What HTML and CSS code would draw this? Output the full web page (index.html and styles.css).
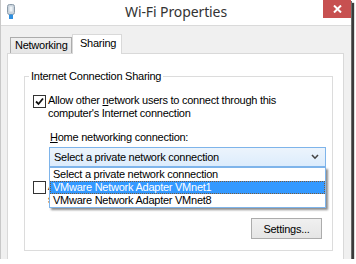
FILE: index.html
```html
<!DOCTYPE html>
<html>
<head>
<meta charset="utf-8">
<link rel="stylesheet" href="styles.css">
</head>
<body>
<div class="window">
  <div class="titlebar">
    <div class="tb-left">
      <svg class="app-icon" width="8" height="15" viewBox="0 0 8 15">
        <rect x="0.5" y="0.5" width="7" height="10" rx="2" fill="#c9d3dc" stroke="#8a9aa8"/>
        <rect x="2.5" y="2.5" width="3" height="5" fill="#eef3f7"/>
        <rect x="2" y="10.5" width="4" height="4.5" fill="#2e8fe0"/>
      </svg>
    </div>
    <div class="title">Wi-Fi Properties</div>
    <div class="tb-right">
      <div class="close">
        <svg width="9" height="8" viewBox="0 0 9 8"><path d="M1 0.5 L8 7.5 M8 0.5 L1 7.5" stroke="#fff" stroke-width="2"/></svg>
      </div>
    </div>
  </div>
  <div class="body">
    <div class="tabs">
      <div class="tab">Networking</div>
      <div class="tab active">Sharing</div>
    </div>
    <div class="pane">
      <div class="group">
        <div class="group-label">Internet Connection Sharing</div>
        <div class="check-row first">
          <span class="checkbox checked">
            <svg width="11" height="11" viewBox="0 0 11 11"><path d="M2 5.5 L4.5 8 L9 2.5" fill="none" stroke="#111" stroke-width="1.8"/></svg>
          </span>
          <span class="check-text">Allow other <u>n</u>etwork users to connect through this<br>computer's Internet connection</span>
        </div>
        <div class="field-label"><u>H</u>ome networking connection:</div>
        <div class="combo-wrap">
          <div class="combo">
            <span>Select a private network connection</span>
            <svg class="arrow" width="8" height="6" viewBox="0 0 8 6"><path d="M1 1 L4 4.2 L7 1" fill="none" stroke="#444" stroke-width="1.6"/></svg>
          </div>
          <ul class="dropdown">
            <li>Select a private network connection</li>
            <li class="selected">VMware Network Adapter VMnet1</li>
            <li>VMware Network Adapter VMnet8</li>
          </ul>
        </div>
        <div class="check-row second">
          <span class="checkbox"></span>
          <span class="check-text">Allow other network users to control or disable the<br>shared Internet connection</span>
        </div>
        <div class="actions">
          <div class="button">Settings...</div>
        </div>
      </div>
    </div>
  </div>
</div>
</body>
</html>
```
FILE: styles.css
```css
* { box-sizing: border-box; }
html, body { margin: 0; padding: 0; background: #fff; }
body {
  font-family: "Liberation Sans", Arial, sans-serif;
  font-size: 11px;
  letter-spacing: -0.25px;
  color: #000;
}
.window {
  width: 351px;
  height: 259px;
  border-left: 1px solid #c8c8c8;
  background: #f0f0f0;
  overflow: hidden;
  box-shadow: 1px 1px 0 #6a6a6a, 3px 3px 1px #3a3a3a;
}
.titlebar {
  height: 26px;
  background: #fff;
  border-bottom: 1px solid #dadada;
  display: grid;
  grid-template-columns: 1fr auto 1fr;
  align-items: start;
}
.tb-left { padding: 4px 0 0 6px; }
.app-icon { display: block; }
.title {
  font-family: "Noto Sans", "Open Sans", sans-serif;
  font-size: 14px;
  color: #333;
  line-height: 24px;
  letter-spacing: -0.1px;
}
.tb-right { display: flex; justify-content: flex-end; }
.close {
  width: 28px;
  height: 18px;
  background: #c75050;
  display: flex;
  align-items: center;
  justify-content: center;
}
.close svg { display: block; }
.body { padding: 8px 7px 0 6px; }
.tabs {
  display: flex;
  align-items: flex-end;
  height: 20px;
  margin-left: 3px;
  margin-bottom: -1px;
  position: relative;
  z-index: 1;
}
.tab {
  height: 16px;
  line-height: 14px;
  padding: 0 0 0 4px;
  border: 1px solid #acacac;
  border-bottom: none;
  background: linear-gradient(#f0f0f0, #e5e5e5);
  width: 62px;
  margin-bottom: 1px;
  white-space: nowrap;
}
.tab.active {
  height: 20px;
  width: 50px;
  margin-bottom: 0;
  background: #fff;
  border-color: #d9d9d9;
  padding: 0 0 0 7px;
  line-height: 16px;
}
.pane {
  background: #fff;
  border: 1px solid #d9d9d9;
  height: 230px;
  padding: 22px 10px 0 16px;
}
.group {
  border: 1px solid #dcdcdc;
  padding: 0 10px 11px 8px;
}
.group-label {
  display: table;
  margin: -8px 0 0 -4px;
  padding: 0 2px;
  background: #fff;
  line-height: 14px;
  color: #000;
}
.check-row {
  display: flex;
  align-items: flex-start;
  gap: 2px;
  line-height: 13px;
}
.check-row.first { margin-top: 11px; }
.check-row.second { margin-top: 13px; }
.checkbox {
  width: 13px;
  height: 13px;
  margin-top: 1px;
  border: 1px solid #333;
  background: #fff;
  flex: none;
  display: flex;
  align-items: center;
  justify-content: center;
}
.checkbox svg { display: block; }
.check-text { white-space: nowrap; }
.field-label {
  margin: 11px 0 0 17px;
  line-height: 13px;
}
.combo-wrap {
  position: relative;
  margin: 3px 0 0 16px;
  width: 277px;
}
.combo {
  height: 20px;
  border: 1px solid #7eb4ea;
  background: linear-gradient(#ecf4fc, #dcecfc);
  display: flex;
  align-items: center;
  justify-content: space-between;
  padding: 0 6px 0 4px;
}
.arrow { display: block; }
.dropdown {
  position: absolute;
  top: 100%;
  left: 0;
  width: 277px;
  margin: 0;
  padding: 0;
  list-style: none;
  background: #fff;
  border: 1px solid #7eb4ea;
  box-shadow: 2px 2px 2px rgba(0, 0, 0, 0.45);
  z-index: 2;
}
.dropdown li {
  height: 13px;
  line-height: 13px;
  padding-left: 3px;
  white-space: nowrap;
}
.dropdown li.selected {
  background: #3399ff;
  color: #fff;
  outline: 1px dotted #7a5a3a;
  outline-offset: -1px;
}
.actions {
  display: flex;
  justify-content: flex-end;
  margin-top: 12px;
}
.button {
  width: 71px;
  height: 21px;
  border: 1px solid #acacac;
  background: linear-gradient(#f0f0f0, #e5e5e5);
  display: flex;
  align-items: center;
  justify-content: center;
}
```
